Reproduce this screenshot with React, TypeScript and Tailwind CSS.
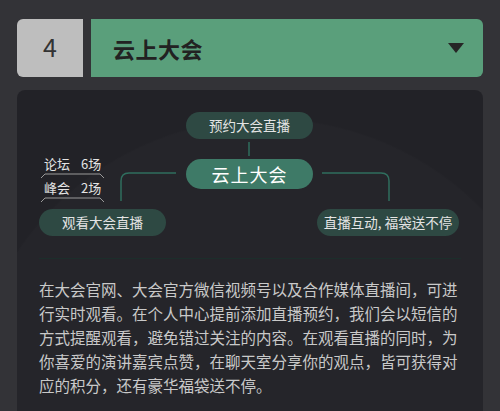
import React from "react";

const font = { fontFamily: '"Noto Sans CJK SC", "Noto Sans", sans-serif' };

export default function App() {
  return (
    <div
      className="w-[500px] h-[411px] overflow-hidden bg-[#333337] pt-[19px] px-[17px]"
      style={font}
    >
      {/* header */}
      <div className="flex h-[58px] gap-[8px]">
        <div className="w-[66px] rounded-l-[6px] bg-[#bebebe] flex items-center justify-center text-[25px] text-[#333] pb-[2px]">
          4
        </div>
        <div className="flex-1 rounded-r-[6px] bg-[#5a9f7b] flex items-center pl-[22px] pr-[19px]">
          <span className="text-[22px] font-bold text-[#222] flex-1 tracking-[0.5px]">云上大会</span>
          <svg width="16" height="11" viewBox="0 0 16 11">
            <polygon points="0,0 16,0 8,10" fill="#262626" />
          </svg>
        </div>
      </div>

      {/* panel */}
      <div className="mt-[13px] h-[400px] rounded-[8px] px-[22px] pt-[22px] bg-[radial-gradient(circle_at_250px_330px,#25252a_0px,#25252a_300px,#222227_302px)]">
        {/* mind map */}
        <div className="relative h-[124px] text-[#e4e4e4]">
          <svg className="absolute left-0 top-0" width="420" height="124">
            <line x1="210" y1="30" x2="210" y2="44" stroke="#2f6e5e" strokeWidth="1.5" />
            <path d="M137 61 H90 Q82 61 82 69 V89" fill="none" stroke="#2f6e5e" strokeWidth="1.5" />
            <path d="M283 61 H342 Q350 61 350 69 V89" fill="none" stroke="#2f6e5e" strokeWidth="1.5" />
            <path d="M2 66 L6 62 H61 L65 66" fill="none" stroke="#9a9a9a" strokeWidth="1" />
            <path d="M2 90 L6 86 H61 L65 90" fill="none" stroke="#9a9a9a" strokeWidth="1" />
          </svg>
          <div className="absolute left-[147px] top-0 w-[127px] h-[27px] rounded-full bg-[#2e4943] flex items-center justify-center text-[13.5px]">
            预约大会直播
          </div>
          <div className="absolute left-[147px] top-[47px] w-[127px] h-[30px] rounded-full bg-[#3e7a67] flex items-center justify-center text-[18px] text-white tracking-[1px]">
            云上大会
          </div>
          <div className="absolute left-[5px] top-[40px] flex flex-col text-[13px] leading-[24px]">
            <div className="flex gap-[11px]">
              <span>论坛</span>
              <span>6场</span>
            </div>
            <div className="flex gap-[11px]">
              <span>峰会</span>
              <span>2场</span>
            </div>
          </div>
          <div className="absolute left-0 top-[97px] w-[127px] h-[27px] rounded-full bg-[#2e4943] flex items-center justify-center text-[13.5px]">
            观看大会直播
          </div>
          <div className="absolute left-[278px] top-[97px] w-[142px] h-[27px] rounded-full bg-[#2e4943] flex items-center justify-center text-[13.5px]">
            直播互动, 福袋送不停
          </div>
        </div>

        <div className="mt-[22px] h-px bg-[#1c2e2b]" />

        <p className="mt-[18px] text-[15.5px] leading-[24px] text-[#c9c9c9]">
          在大会官网、大会官方微信视频号以及合作媒体直播间，可进行实时观看。在个人中心提前添加直播预约，我们会以短信的方式提醒观看，避免错过关注的内容。在观看直播的同时，为你喜爱的演讲嘉宾点赞，在聊天室分享你的观点，皆可获得对应的积分，还有豪华福袋送不停。
        </p>
      </div>
    </div>
  );
}
